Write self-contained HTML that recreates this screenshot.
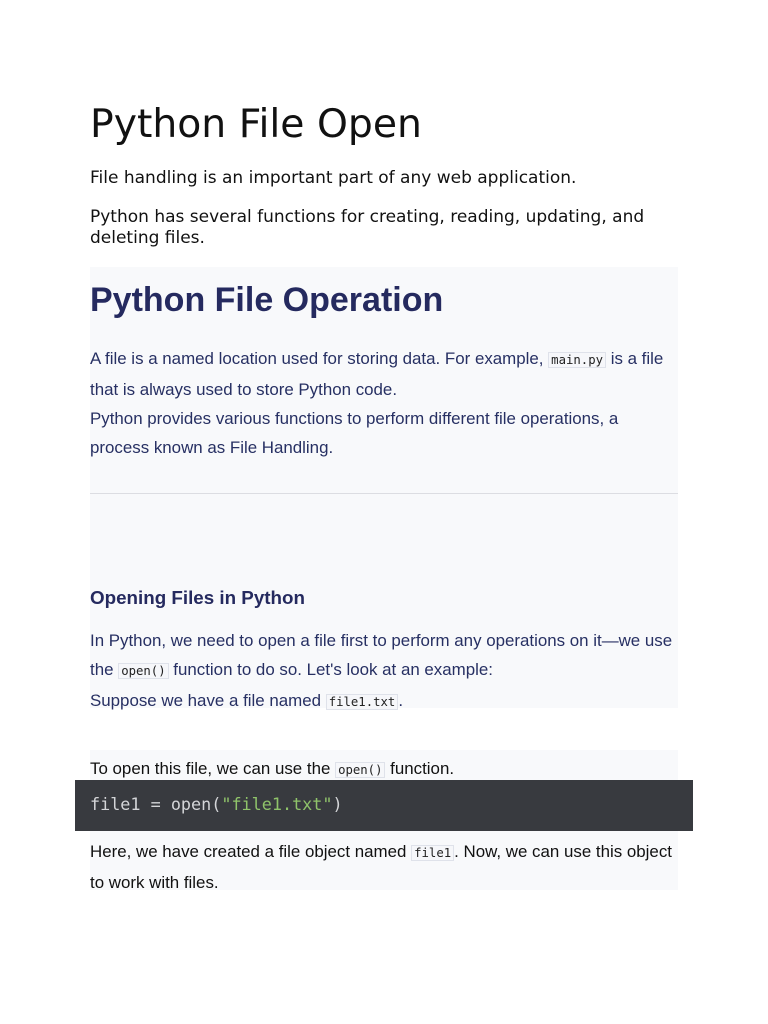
<!DOCTYPE html>
<html><head><meta charset="utf-8"><style>
body{margin:0;width:768px;height:1024px;background:#fff;position:relative;overflow:hidden}
.a{position:absolute;white-space:nowrap}
.dj{font-family:"DejaVu Sans",sans-serif;color:#111}
.ls{font-family:"Liberation Sans",sans-serif;font-size:16.9px;color:#273063}
code{font-family:"DejaVu Sans Mono",monospace;font-size:12.3px;background:#f6f7fa;border:1px solid #dfe2ea;padding:0 2px;color:#222}
.box{position:absolute;background:#f8f9fb}
</style></head><body>
<div class="a dj" style="left:90px;top:102px;font-size:39.3px">Python File Open</div>
<div class="a dj" style="left:90px;top:168px;font-size:17px">File handling is an important part of any web application.</div>
<div class="a dj" style="left:90px;top:207px;font-size:17px;line-height:21px">Python has several functions for creating, reading, updating, and<br>deleting files.</div>
<div class="box" style="left:90px;top:267px;width:588px;height:441px"></div>
<div class="a" style="left:90px;top:281px;font-family:'Liberation Sans',sans-serif;font-weight:bold;font-size:34px;color:#252a5f">Python File Operation</div>
<div class="a ls" style="left:90px;top:344px;line-height:29px">A file is a named location used for storing data. For example, <code>main.py</code> is a file<br>that is always used to store Python code.<br>Python provides various functions to perform different file operations, a<br>process known as File Handling.</div>
<div class="a" style="left:90px;top:493px;width:588px;height:1px;background:#dcdde2"></div>
<div class="a" style="left:90px;top:587px;font-family:'Liberation Sans',sans-serif;font-weight:bold;font-size:18.8px;color:#252a5f">Opening Files in Python</div>
<div class="a ls" style="left:90px;top:626px;line-height:29px">In Python, we need to open a file first to perform any operations on it—we use<br>the <code>open()</code> function to do so. Let's look at an example:<br>Suppose we have a file named <code>file1.txt</code>.</div>
<div class="box" style="left:90px;top:750px;width:588px;height:140px"></div>
<div class="a ls" style="left:90px;top:759px;color:#111">To open this file, we can use the <code>open()</code> function.</div>
<div class="a" style="left:75px;top:780px;width:618px;height:51px;background:#383a3f"></div>
<div class="a" style="left:90px;top:794px;font-family:'DejaVu Sans Mono',monospace;font-size:16.8px;color:#d4d5d8">file1 = open(<span style="color:#8fc36a">"file1.txt"</span>)</div>
<div class="a ls" style="left:90px;top:837px;line-height:30px;color:#111">Here, we have created a file object named <code>file1</code>. Now, we can use this object<br>to work with files.</div>
</body></html>
